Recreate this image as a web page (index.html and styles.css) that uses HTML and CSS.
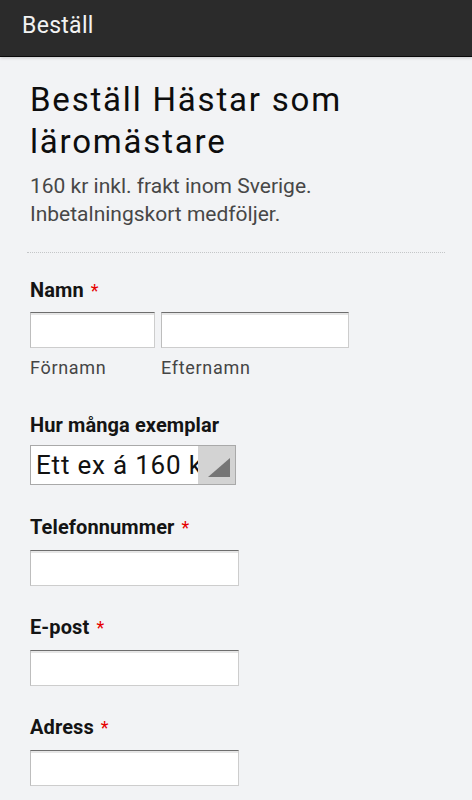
FILE: index.html
```html
<!DOCTYPE html>
<html lang="sv">
<head>
<meta charset="utf-8">
<title>Beställ</title>
<link rel="stylesheet" href="styles.css">
</head>
<body>
<header class="appbar">Beställ</header>
<main class="page">
  <h1 class="title">Beställ Hästar som läromästare</h1>
  <p class="intro">160 kr inkl. frakt inom Sverige.<br>Inbetalningskort medföljer.</p>
  <hr class="divider">
  <div class="field field-name">
    <div class="label">Namn <span class="req">*</span></div>
    <div class="name-row">
      <div class="name-col">
        <div class="input input-first"></div>
        <div class="sublabel">Förnamn</div>
      </div>
      <div class="name-col">
        <div class="input input-last"></div>
        <div class="sublabel">Efternamn</div>
      </div>
    </div>
  </div>
  <div class="field field-qty">
    <div class="label">Hur många exemplar</div>
    <div class="select">
      <span class="select-text">Ett ex á 160 kr</span>
      <span class="select-arrow"><svg width="22" height="19" viewBox="0 0 22 19"><polygon points="22,0 22,19 0,19" fill="#767676"/></svg></span>
    </div>
  </div>
  <div class="field field-after-select">
    <div class="label">Telefonnummer <span class="req">*</span></div>
    <div class="input input-wide"></div>
  </div>
  <div class="field">
    <div class="label">E-post <span class="req">*</span></div>
    <div class="input input-wide"></div>
  </div>
  <div class="field">
    <div class="label">Adress <span class="req">*</span></div>
    <div class="input input-wide"></div>
  </div>
</main>
</body>
</html>
```
FILE: styles.css
```css
html, body {
  margin: 0;
  padding: 0;
}
body {
  background: #f2f3f5;
  font-family: Roboto, "Noto Sans", Arial, sans-serif;
  color: #111;
  width: 472px;
  height: 800px;
  overflow: hidden;
}
.appbar {
  height: 56px;
  background: #2b2b2b;
  color: #f2f2f2;
  font-size: 23px;
  letter-spacing: 0.3px;
  line-height: 52px;
  padding-left: 22px;
  border-bottom: 1px solid #0a0a0a;
  box-shadow: 0 1px 3px rgba(0,0,0,0.18);
}
.page {
  padding: 22px 30px 0 30px;
}
.title {
  margin: 0;
  font-size: 33px;
  letter-spacing: 1.8px;
  line-height: 42px;
  font-weight: 400;
  color: #0d0d0d;
}
.intro {
  margin: 9px 0 0 0;
  font-size: 21px;
  line-height: 28px;
  color: #474747;
}
.divider {
  margin: 24px -3px 0 -3px;
  border: 0;
  border-top: 1px dotted #c4c6c8;
  height: 0;
}
.field {
  margin-top: 29px;
}
.field-name {
  margin-top: 25px;
}
.field-qty {
  margin-top: 34px;
}
.field-after-select {
  margin-top: 30px;
}
.label {
  font-size: 20px;
  line-height: 24px;
  font-weight: 700;
  letter-spacing: 0.1px;
  color: #141414;
  margin-bottom: 10px;
}
.field-name .label {
  margin-bottom: 9px;
}
.field-qty .label {
  margin-bottom: 8px;
}
.req {
  color: #e60000;
  font-weight: 400;
  font-size: 18px;
  margin-left: 2px;
}
.name-row {
  display: flex;
  gap: 6px;
}
.input {
  box-sizing: border-box;
  height: 36px;
  background: #fff;
  border: 1px solid #cdcdcd;
  border-top-color: #6d6d6d;
  border-left-color: #bdbdbd;
  box-shadow: inset 0 2px 0 #e6e6e6;
}
.input-first { width: 125px; }
.input-last { width: 188px; }
.input-wide { width: 209px; }
.sublabel {
  font-size: 18px;
  letter-spacing: 0.7px;
  line-height: 22px;
  color: #454545;
  margin-top: 9px;
}
.select {
  box-sizing: border-box;
  width: 206px;
  height: 40px;
  display: flex;
  border: 1px solid #a9a9a9;
  background: #fff;
}
.select-text {
  flex: 1;
  overflow: hidden;
  white-space: nowrap;
  font-size: 26px;
  letter-spacing: 0.8px;
  line-height: 38px;
  padding-left: 5px;
  color: #111;
}
.select-arrow {
  width: 37px;
  background: #d3d3d3;
  display: flex;
  align-items: flex-end;
  justify-content: flex-end;
  padding: 0 5px 7px 0;
  box-sizing: border-box;
}
.select-arrow svg {
  display: block;
}
```
